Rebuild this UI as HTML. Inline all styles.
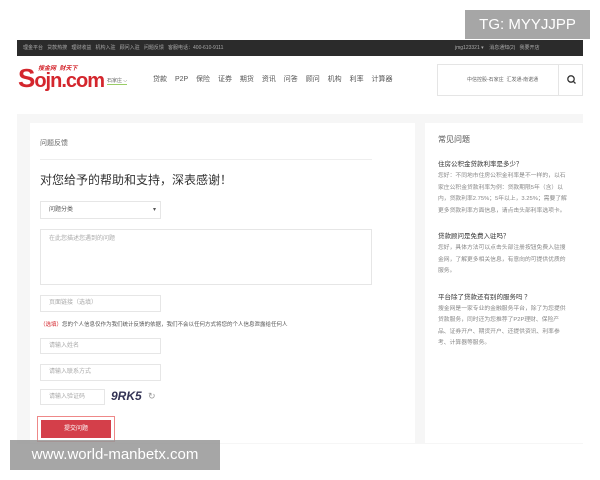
<!DOCTYPE html><html><head><meta charset="utf-8"><style>
body{margin:0;width:600px;height:480px;overflow:hidden;background:#fff;font-family:"Liberation Sans","Noto Sans CJK SC",sans-serif;position:relative}
.a{position:absolute}
.in{position:absolute;border:1px solid #e6e6e6;background:#fff;font-size:6px;color:#aaa;padding-left:8px;box-sizing:border-box;line-height:15px}
.q{font-size:6.5px;color:#333;margin:13px 0 3px}
.ans{font-size:5.8px;color:#888;line-height:11.5px}
</style></head><body>
<div class="a" style="left:465px;top:10px;width:125px;height:29px;background:#a6a6a6;color:#fff;font-size:15px;line-height:29px;text-align:center">TG: MYYJJPP</div>
<div class="a" style="left:17px;top:40px;width:566px;height:16px;background:#2b2b2b;color:#aaa;font-size:5px;line-height:16px">
<span style="margin-left:6px">理金平台 &nbsp; 贷款热搜 &nbsp; 理财收益 &nbsp; 机构入驻 &nbsp; 顾问入驻 &nbsp; 问题反馈 &nbsp; 客服电话：400-610-9111</span>
<span style="position:absolute;left:438px">jmg123321 ▾ &nbsp; &nbsp;消息通知(2) &nbsp; 我要开店</span></div>
<div class="a" style="left:18px;top:64px;color:#d4262d;font-size:26px;font-weight:bold;letter-spacing:-1px;line-height:28px">S<span style="font-size:20px">ojn.com</span></div>
<div class="a" style="left:38px;top:63px;color:#d4262d;font-size:6px;font-weight:bold;font-style:italic">搜金网 &nbsp;财天下</div>
<div class="a" style="left:107px;top:77px;font-size:5px;color:#666;border-bottom:1px solid #9c6">石家庄 ⌵</div>
<div class="a" style="left:153px;top:74px;font-size:7px;color:#555;word-spacing:6px">贷款 P2P 保险 证券 期货 资讯 问答 顾问 机构 利率 计算器</div>
<div class="a" style="left:437px;top:64px;width:146px;height:32px;border:1px solid #e5e5e5;box-sizing:border-box"></div>
<div class="a" style="left:467px;top:76px;font-size:5px;color:#666">中信控股-石家庄 &nbsp;汇发通-南诺通</div>
<div class="a" style="left:558px;top:64px;width:25px;height:32px;border-left:1px solid #e5e5e5"><svg width="25" height="32"><circle cx="12" cy="15" r="3.2" fill="none" stroke="#333" stroke-width="1.3"/><line x1="14.3" y1="17.3" x2="16.5" y2="19.5" stroke="#333" stroke-width="1.3"/></svg></div>
<div class="a" style="left:17px;top:114px;width:566px;height:330px;background:#f6f6f6"></div>
<div class="a" style="left:30px;top:123px;width:385px;height:320px;background:#fff"></div>
<div class="a" style="left:425px;top:123px;width:158px;height:320px;background:#fff;padding:11px 14px 0 13px;box-sizing:border-box">
<div style="font-size:8px;color:#555">常见问题</div>
<div class="q" style="margin-top:13px">住房公积金贷款利率是多少？</div>
<div class="ans">您好：不同地市住房公积金利率是不一样的，以石家庄公积金贷款利率为例：贷款期限5年（含）以内，贷款利率2.75%；5年以上，3.25%；需要了解更多贷款利率方面信息，请点击头部利率选项卡。</div>
<div class="q">贷款顾问是免费入驻吗？</div>
<div class="ans">您好，具体方法可以点击头部注册按钮免费入驻搜金网，了解更多相关信息，有意向的可提供优质的服务。</div>
<div class="q">平台除了贷款还有别的服务吗 ？</div>
<div class="ans">搜金网是一家专业的金融服务平台，除了为您提供贷款服务，同时还为您推荐了P2P理财、保险产品、证券开户、期货开户、还提供资讯、利率参考、计算器等服务。</div></div>
<div class="a" style="left:40px;top:138px;font-size:7px;color:#666">问题反馈</div>
<div class="a" style="left:40px;top:159px;width:332px;height:1px;background:#eee"></div>
<div class="a" style="left:40px;top:171px;font-size:12px;color:#333">对您给予的帮助和支持，深表感谢！</div>
<div class="in" style="left:40px;top:201px;width:121px;height:18px;color:#555;line-height:17px">问题分类<span style="float:right;margin-right:4px">▾</span></div>
<div class="in" style="left:40px;top:229px;width:332px;height:56px;line-height:18px">在此您描述您遇到的问题</div>
<div class="in" style="left:40px;top:295px;width:121px;height:17px">页面链接（选填）</div>
<div class="a" style="left:40px;top:320px;font-size:5.5px;color:#555"><span style="color:#d4262d">（选填）</span>您的个人信息仅作为我们统计反馈的依据，我们不会以任何方式将您的个人信息泄露给任何人</div>
<div class="in" style="left:40px;top:338px;width:121px;height:16px">请输入姓名</div>
<div class="in" style="left:40px;top:364px;width:121px;height:17px">请输入联系方式</div>
<div class="in" style="left:40px;top:389px;width:65px;height:16px">请输入验证码</div>
<div class="a" style="left:111px;top:389px;font-size:12px;color:#335;font-weight:bold;font-style:italic">9RK5</div>
<div class="a" style="left:148px;top:391px;font-size:9px;color:#999">↻</div>
<div class="a" style="left:37px;top:416px;width:78px;height:26px;border:1px solid #e88;background:#fff;box-sizing:border-box;padding:3px"><div style="background:#d43f4a;height:18px;color:#fff;font-size:6px;text-align:center;line-height:18px">提交问题</div></div>
<div class="a" style="left:10px;top:440px;width:210px;height:30px;background:rgba(150,150,150,.85);color:#fff;font-size:15px;line-height:30px;text-align:center">www.world-manbetx.com</div>
</body></html>
